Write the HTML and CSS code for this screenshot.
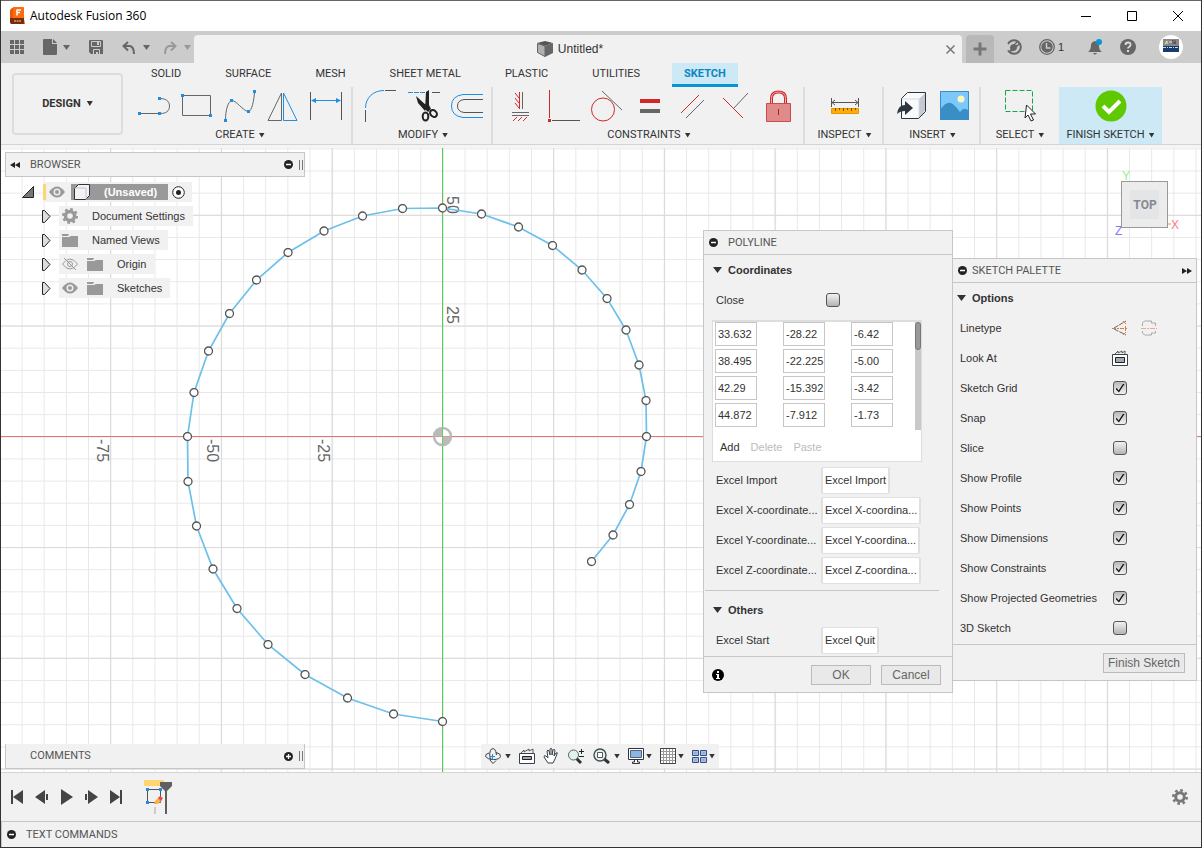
FILE: index.html
```
<!DOCTYPE html>
<html lang="en">
<head>
<meta charset="utf-8">
<title>Autodesk Fusion 360</title>
<link rel="stylesheet" href="styles.css">
</head>
<body>
<header class="titlebar">
  <svg class="app-icon" width="15" height="18" viewBox="0 0 15 18"><path d="M2 1h12v11l1 5H1L0 15V3z" fill="#e8590c"/><path d="M3 0h10q1 0 1 1v10H3z" fill="#ff6b0f"/><path d="M0 11h14v5q0 1-1 1H2q-2 0-2-2z" fill="#7b2c05"/><path d="M7 3h4M7 2.500v6M7 5.500h3" stroke="#fff" stroke-width="1.500" fill="none"/><path d="M4 14h7" stroke="#eadbd2" stroke-dasharray="2 .6"/></svg>
  <h1>Autodesk Fusion 360</h1>
  <div class="win-buttons">
    <button aria-label="Minimize"><svg width="12" height="12"><path d="M1 6.500h10" stroke="#000"/></svg></button>
    <button aria-label="Maximize"><svg width="12" height="12"><path d="M1.500 1.500h9v9h-9z" stroke="#000" fill="none"/></svg></button>
    <button aria-label="Close"><svg width="12" height="12"><path d="M1 1l10 10M11 1L1 11" stroke="#000"/></svg></button>
  </div>
</header>

<div class="tabbar">
  <div class="quick">
    <button aria-label="Data panel"><svg width="14" height="14" fill="#666"><path d="M0 0h4v4H0zM5 0h4v4H5zM10 0h4v4h-4zM0 5h4v4H0zM5 5h4v4H5zM10 5h4v4h-4zM0 10h4v4H0zM5 10h4v4H5zM10 10h4v4h-4z"/></svg></button>
    <button aria-label="File"><svg width="14" height="16" fill="#666"><path d="M1 0h8v5h5v10q0 1-1 1H1q-1 0-1-1V1q0-1 1-1zM10 0l4 4h-4z"/></svg><svg width="7" height="5" fill="#666"><path d="M0 0h7L3.500 5z"/></svg></button>
    <button aria-label="Save"><svg width="14" height="14"><path d="M1 0h12q1 0 1 1v13H2l-2-2V1q0-1 1-1z" fill="#666"/><path d="M2.500 1.500h9v5h-9zM4.500 14V9.500h6V14" fill="none" stroke="#ccc"/><path d="M8 2h2v3H8z" fill="#ccc"/><path d="M7 12h2v2H7z" fill="#ccc"/></svg></button>
    <button aria-label="Undo"><svg width="14" height="13"><path d="M6 1L1.500 5 6 9.500M2 5h6q4 1 4 8" fill="none" stroke="#666" stroke-width="2"/></svg><svg width="7" height="5" fill="#666"><path d="M0 0h7L3.500 5z"/></svg></button>
    <button aria-label="Redo"><svg width="14" height="13"><path d="M8 1l4.500 4L8 9.500M12 5H6q-4 1-4 8" fill="none" stroke="#999" stroke-width="2"/></svg><svg width="7" height="5" fill="#999"><path d="M0 0h7L3.500 5z"/></svg></button>
  </div>
  <div class="doc-tab">
    <svg width="16" height="16"><path d="M0 2l8-2 8 2-8 3z" fill="#555"/><path d="M.5 2.500L8 5v10.500l-7.500-4z" fill="#b0b0b0" stroke="#666"/><path d="M8 5l8-3v10l-8 4z" fill="#666"/></svg>
    <span>Untitled*</span>
    <button class="tab-close" aria-label="Close tab"><svg width="9" height="9"><path d="M.5.500l8 8M8.500.500l-8 8" stroke="#777" stroke-width="1.500"/></svg></button>
  </div>
  <div class="account">
    <button class="new-tab" aria-label="New tab"><svg width="14" height="14"><path d="M7 .500v13M.5 7h13" stroke="#777" stroke-width="3"/></svg></button>
    <button aria-label="Extensions"><svg width="16" height="16"><circle cx="8" cy="8" r="6.800" fill="none" stroke="#666" stroke-width="2"/><path d="M0 3l4 4-1 4-3 1z" fill="#ccc"/><path d="M3 13q2-2 1-5 1-3 4-3l3-3 1 1-3 3h2l2-2 1 1-3 3q0 4-4 4-3 0-4 2z" fill="#666"/></svg></button>
    <button aria-label="Job status" class="job"><svg width="16" height="16"><circle cx="8" cy="8" r="7.300" fill="none" stroke="#666" stroke-width="1.300"/><circle cx="8" cy="8" r="5.700" fill="#666"/><path d="M7.500 4v5h4" fill="none" stroke="#ccc" stroke-width="1.500"/></svg><span>1</span></button>
    <button aria-label="Notifications"><svg width="15" height="16"><path d="M0 13q3-2 3-7 0-3 4-4 4 1 4 5 0 4 3 6zM5 14h4q-2 3-4 0z" fill="#666"/><circle cx="11" cy="3" r="3" fill="#0696d7"/></svg></button>
    <button aria-label="Help"><svg width="16" height="16"><circle cx="8" cy="8" r="8" fill="#666"/><path d="M5.500 6q0-2.500 2.500-2.500 3 0 2.500 2.500 0 1-1.500 2-1 .5-1 1.500" stroke="#ddd" stroke-width="1.800" fill="none"/><path d="M7 11h2v2H7z" fill="#ddd"/></svg></button>
    <button aria-label="Profile"><svg width="24" height="24"><circle cx="12" cy="12" r="12" fill="#fff"/><path d="M4 4h16v7H4z" fill="#888"/><path d="M4 11h16v6H4z" fill="#173d6e"/><path d="M6 9l2-3v3m2-2h3m1 2V6h3" stroke="#eee8bd" fill="none"/><path d="M4 12.500h16" stroke="#c8d9e8" stroke-dasharray="3 1 1 1"/><path d="M14 5v4m2-4v4" stroke="#222"/></svg></button>
  </div>
</div>

<section class="ribbon">
  <button class="design">DESIGN <i class="caret"></i></button>
  <div class="ribbon-main">
    <nav class="tabs">
      <a href="#">SOLID</a><a href="#">SURFACE</a><a href="#">MESH</a><a href="#">SHEET METAL</a><a href="#">PLASTIC</a><a href="#">UTILITIES</a><a href="#" class="active">SKETCH</a>
    </nav>
    <div class="groups">
      <div class="group">
        <div class="tools">
          <svg width="32" height="32"><path d="M1 23.500h21M22 8.500c5 0 9.500 2 9.500 7.500s-4 7.500-9 7.500" fill="none" stroke="#666"/><path d="M0 22h3v3H0zM20 22h3v3h-3zM20 7h3v3h-3z" fill="#1a8fe3"/></svg>
          <svg width="32" height="32"><path d="M1.500 5.500h28v20h-28z" fill="none" stroke="#666"/><path d="M0 4h3v3H0zM28 24h3v3h-3z" fill="#1a8fe3"/></svg>
          <svg width="32" height="32"><path d="M1.500 30C1.500 20 4 12 7.500 10.500c4-1 12 11 17 11C28 21 30 10 30.500 2" fill="none" stroke="#666"/><path d="M0 29h3v3H0zM6 9h3v3H6zM23 20h3v3h-3zM29 0h3v3h-3z" fill="#1a8fe3"/></svg>
          <svg width="32" height="32"><path d="M14.500 3v27.500H1z" fill="none" stroke="#666"/><path d="M16.500 3v27.500H30z" fill="none" stroke="#1a8fe3"/></svg>
          <svg width="32" height="32"><path d="M.5 2v28M31.500 2v28" stroke="#555"/><path d="M3 10.500h26" stroke="#1a8fe3"/><path d="M1 10.500l5-2.500v5zM31 10.500L26 8v5z" fill="#1a8fe3"/></svg>
        </div>
        <button class="group-name">CREATE <i class="caret"></i></button>
      </div>
      <div class="group">
        <div class="tools">
          <svg width="32" height="32"><path d="M1.500 18C1.500 8 9 .500 20 .500" fill="none" stroke="#1a8fe3"/><path d="M1.500 20v12M21 .500h11" stroke="#555"/></svg>
          <svg width="32" height="32"><path d="M1 2.500h17" stroke="#1a8fe3" stroke-dasharray="5 1"/><path d="M25 2.500h8" stroke="#555"/><path d="M19 2l3-2v15l2 4-3 3-3-3zM9 6l11 10-2 5-7-8z" fill="#222"/><ellipse cx="18.500" cy="26.500" rx="2.800" ry="4" fill="none" stroke="#222" stroke-width="2"/><ellipse cx="26.500" cy="23.500" rx="3" ry="3.800" transform="rotate(-45 26.500 23.500)" fill="none" stroke="#222" stroke-width="2"/></svg>
          <svg width="32" height="32"><path d="M33 4.500H13Q1.500 6 1.500 16T13 27.500h20" fill="none" stroke="#1a8fe3"/><path d="M33 9.500H14q-6.500 1-6.500 6.500t6.500 6.500h19" fill="none" stroke="#555"/></svg>
        </div>
        <button class="group-name">MODIFY <i class="caret"></i></button>
      </div>
      <div class="group">
        <div class="tools">
          <svg width="32" height="32"><path d="M15.500 2v17M11 3l4 5m-4 0l4 5m-4 0l4 5M9 31l4-4m1 4l4-4m1 4l4-4" stroke="#d12828" fill="none"/><path d="M18.500 2v17M8 22.500h17M8 25.500h17" stroke="#666"/></svg>
          <svg width="32" height="32"><path d="M2.500 0v28" stroke="#d12828"/><path d="M1 29h3v3H1z" fill="#d12828"/><path d="M5 30.500h28" stroke="#555"/></svg>
          <svg width="32" height="32"><circle cx="13" cy="19.500" r="11.500" fill="none" stroke="#d12828"/><path d="M12 1l20 19" stroke="#666"/></svg>
          <svg width="32" height="32"><path d="M7 9h20v4H7z" fill="#d12828"/><path d="M7 19h20v4H7z" fill="#666"/></svg>
          <svg width="32" height="32"><path d="M5 23L23 5" stroke="#d12828"/><path d="M10 28l18-18" stroke="#666"/></svg>
          <svg width="32" height="32"><path d="M4 8l20 20" stroke="#d12828"/><path d="M15 18L29 3" stroke="#666"/></svg>
          <svg width="32" height="32"><path d="M4.500 13.500h24v18h-24z" fill="#e18a8a" stroke="#c94b4b"/><path d="M9.500 13V8.500q0-6.500 7-6.500t7 6.500V13" fill="none" stroke="#d12828" stroke-width="3"/><path d="M9.500 13V8.500q0-6.500 7-6.500t7 6.500V13" fill="none" stroke="#efb0b0"/><path d="M16.500 19v6" stroke="#b51f1f"/></svg>
        </div>
        <button class="group-name">CONSTRAINTS <i class="caret"></i></button>
      </div>
      <div class="group">
        <div class="tools">
          <svg width="32" height="32"><path d="M2.500 8v9M29.500 8v9M3 12.500h26M6 10l-3 2.500L6 15m20-5l3 2.500-3 2.500" stroke="#555" fill="none"/><path d="M2.500 18.500h27v5h-27z" fill="#ffac08" stroke="#e39700"/><path d="M6.500 18v3m4-3v2m4-2v3m4-3v2m4-2v3m4-3v2" stroke="#7c5200"/></svg>
        </div>
        <button class="group-name">INSPECT <i class="caret"></i></button>
      </div>
      <div class="group">
        <div class="tools">
          <svg width="32" height="32"><path d="M6.500 8.500l6-6h18v19l-7 7h-17z" fill="#f9fafc"/><path d="M24 9l6-6v18l-6 7z" fill="#c5cad2"/><path d="M7 9h17v19" stroke="#d5d9df" fill="none"/><path d="M6.500 8.500l6-6h18v19l-7 7h-17z" fill="none" stroke="#2b3440"/><path d="M2 24q1-9 8-9v-4l8 7-8 7v-4q-5 0-8 3z" fill="#30363e"/></svg>
          <svg width="32" height="32"><path d="M2 1h29v29H2z" fill="#7cc8fb"/><circle cx="23" cy="9" r="3.500" fill="#fbf8bb"/><path d="M2 20q6-9 11-7 4 2 9 9 4-6 9-1v9H2z" fill="#3a8ec6"/><path d="M2.500 1.500h28v28h-28z" fill="none" stroke="#3a8ec6"/></svg>
        </div>
        <button class="group-name">INSERT <i class="caret"></i></button>
      </div>
      <div class="group">
        <div class="tools">
          <svg width="32" height="32"><path d="M1.500.500h27v21h-27z" fill="none" stroke="#13a74b" stroke-dasharray="5 2"/><path d="M22.500 15l9 9h-5l3 6-2.500 1-3-6-3 3z" fill="#fff" stroke="#222"/></svg>
        </div>
        <button class="group-name">SELECT <i class="caret"></i></button>
      </div>
      <div class="group finish">
        <div class="tools">
          <svg width="32" height="32"><circle cx="16" cy="16" r="15.500" fill="#5fc900"/><path d="M8 16l6 6 11-11" stroke="#fff" stroke-width="4" fill="none"/></svg>
        </div>
        <button class="group-name">FINISH SKETCH <i class="caret"></i></button>
      </div>
    </div>
  </div>
</section>

<main class="canvas">
  <svg class="sketch" width="100%" height="100%">
    <defs>
      <pattern id="minor" x="442.400" y="436.300" width="22.150" height="22.150" patternUnits="userSpaceOnUse"><path d="M0 0V22.150M0 0H22.150" stroke="#e8e8e8" stroke-width="2" fill="none"/></pattern>
      <pattern id="major" x="442.400" y="436.300" width="110.750" height="110.750" patternUnits="userSpaceOnUse"><path d="M0 0V110.750M0 0H110.750" stroke="#d9d9d9" stroke-width="2.200" fill="none"/></pattern>
      <marker id="node" markerWidth="10" markerHeight="10" refX="5" refY="5" markerUnits="userSpaceOnUse"><circle cx="5" cy="5" r="4" fill="#fff" stroke="#555" stroke-width="1.300"/></marker>
    </defs>
    <g transform="translate(-1 -148)">
      <rect width="5000" height="3000" fill="url(#minor)"/>
      <rect width="5000" height="3000" fill="url(#major)"/>
      <path d="M0 436.500h5000" stroke="#e07878"/>
      <path d="M442.500 0v3000" stroke="#4fcf4f"/>
      <g class="axis">
        <text transform="translate(447 196) rotate(90)">50</text>
        <text transform="translate(447 306) rotate(90)">25</text>
        <text transform="translate(97 439) rotate(90)">-75</text>
        <text transform="translate(207 439) rotate(90)">-50</text>
        <text transform="translate(318 439) rotate(90)">-25</text>
      </g>
      <circle cx="442.500" cy="436.500" r="8.500" fill="#fff" stroke="#bbb" stroke-width="2.500"/>
      <path d="M442.500 436.500v-9a9 9 0 0 0-9 9zM442.500 436.500v9a9 9 0 0 0 9-9z" fill="#bbb"/>
      <path d="M434 436.500h17" stroke="#d99"/><path d="M442.500 428v17" stroke="#6c6"/>
      <polyline points="591.500,561.500 613,535 629.500,504.500 641,471.500 646.500,436.500 646,400.500 639,365 626,330 607,298.500 582,270 552.500,245.500 518.500,227 481.500,214 442.500,208 402.500,208.500 362.500,216 324,231 288,252.500 256.500,280 229.500,313.500 208.500,351 194,392.500 187.500,436.500 188,481.500 196.500,526 213,569 237,608.500 268,644.500 305,674.500 347.500,698 393.500,714 442.500,721.500" fill="none" stroke="#6cc0ea" stroke-width="1.700" marker-start="url(#node)" marker-mid="url(#node)" marker-end="url(#node)"/>
    </g>
  </svg>

  <aside class="browser">
    <div class="dock"><svg width="10" height="6" fill="#222"><path d="M5 0v6L0 3zM10 0v6L5 3z"/></svg><h2>BROWSER</h2><svg class="end" width="9" height="9"><circle cx="4.500" cy="4.500" r="4.500" fill="#222"/><path d="M2 4.500h5" stroke="#fff" stroke-width="1.500"/></svg><i class="grip"></i></div>
    <ul class="tree">
      <li class="root"><svg class="twist" width="12" height="12"><path d="M11.500 .500v11H.5z" fill="#777" stroke="#222"/></svg>
        <div class="node"><i class="mark"></i><svg width="16" height="12"><path d="M0 6q8-11 16 0-8 11-16 0z" fill="#999"/><circle cx="8" cy="6" r="3.500" fill="#eee"/><circle cx="8" cy="6" r="2" fill="#999"/></svg>
          <span class="doc"><svg width="16" height="16"><path d="M.5 4.500l4-4h11v11l-4 4H.5z" fill="#f2f3f6" stroke="#333"/><path d="M1 4h11v11" fill="none" stroke="#bfc3ca"/></svg>(Unsaved)</span>
          <svg width="13" height="13"><circle cx="6.500" cy="6.500" r="5.800" fill="#fff" stroke="#222"/><circle cx="6.500" cy="6.500" r="2.500" fill="#222"/></svg></div></li>
      <li><svg class="twist" width="10" height="13"><path d="M1.500 .500h2L9 6.500l-5.500 6h-2z" fill="#ddd" stroke="#222"/></svg><div class="node"><svg width="16" height="16"><circle cx="8" cy="8" r="4.500" fill="none" stroke="#999" stroke-width="3.500"/><circle cx="8" cy="8" r="6.700" fill="none" stroke="#999" stroke-width="2.600" stroke-dasharray="2.630 2.630"/></svg><span>Document Settings</span></div></li>
      <li><svg class="twist" width="10" height="13"><path d="M1.500 .500h2L9 6.500l-5.500 6h-2z" fill="#ddd" stroke="#222"/></svg><div class="node"><svg width="16" height="13" fill="#999"><path d="M0 3h7l2-1h7v11H0zM0 0h7L6 2H0z"/></svg><span>Named Views</span></div></li>
      <li><svg class="twist" width="10" height="13"><path d="M1.500 .500h2L9 6.500l-5.500 6h-2z" fill="#ddd" stroke="#222"/></svg><div class="node"><svg width="16" height="12"><path d="M.5 6q7.500-10 15 0-7.500 10-15 0z" fill="none" stroke="#999"/><circle cx="8" cy="6" r="2.500" fill="none" stroke="#999"/><path d="M2 0l12 12" stroke="#999"/></svg><svg class="second" width="16" height="13" fill="#999"><path d="M0 3h7l2-1h7v11H0zM0 0h7L6 2H0z"/></svg><span class="deep">Origin</span></div></li>
      <li><svg class="twist" width="10" height="13"><path d="M1.500 .500h2L9 6.500l-5.500 6h-2z" fill="#ddd" stroke="#222"/></svg><div class="node"><svg width="16" height="12"><path d="M0 6q8-11 16 0-8 11-16 0z" fill="#999"/><circle cx="8" cy="6" r="3.500" fill="#eee"/><circle cx="8" cy="6" r="2" fill="#999"/></svg><svg class="second" width="16" height="13" fill="#999"><path d="M0 3h7l2-1h7v11H0zM0 0h7L6 2H0z"/></svg><span class="deep">Sketches</span></div></li>
    </ul>
  </aside>

  <div class="comments dock"><h2>COMMENTS</h2><svg class="end" width="9" height="9"><circle cx="4.500" cy="4.500" r="4.500" fill="#222"/><path d="M2 4.500h5M4.500 2v5" stroke="#fff" stroke-width="1.300"/></svg><i class="grip"></i></div>

  <svg class="viewcube" width="72" height="74"><text x="8" y="12" fill="#8cf58c">Y</text><text x="57" y="61" fill="#ff8080">X</text><text x="1" y="67" fill="#7777ff">Z</text><path d="M53 56h4" stroke="#ff8080"/><rect x="7.500" y="13.500" width="46" height="46" fill="#ebebec" fill-opacity=".93" stroke="#999"/><rect x="16" y="22" width="29" height="29" fill="#e4e5e7"/><text class="face" x="31" y="41" text-anchor="middle">TOP</text></svg>

  <section class="dialog polyline">
    <header><svg width="9" height="9"><circle cx="4.500" cy="4.500" r="4.500" fill="#222"/><path d="M2 4.500h5" stroke="#fff" stroke-width="1.500"/></svg><h2>POLYLINE</h2></header>
    <div class="content">
      <h3><i class="open"></i>Coordinates</h3>
      <div class="row"><label for="close">Close</label><input class="inset" type="checkbox" id="close"></div>
      <div class="coords">
        <div class="scroll">
          <table>
            <tr><td><input type="text" aria-label="X 1" value="33.632"></td><td><input type="text" aria-label="Y 1" value="-28.22"></td><td><input type="text" aria-label="Z 1" value="-6.42"></td></tr>
            <tr><td><input type="text" aria-label="X 2" value="38.495"></td><td><input type="text" aria-label="Y 2" value="-22.225"></td><td><input type="text" aria-label="Z 2" value="-5.00"></td></tr>
            <tr><td><input type="text" aria-label="X 3" value="42.29"></td><td><input type="text" aria-label="Y 3" value="-15.392"></td><td><input type="text" aria-label="Z 3" value="-3.42"></td></tr>
            <tr><td><input type="text" aria-label="X 4" value="44.872"></td><td><input type="text" aria-label="Y 4" value="-7.912"></td><td><input type="text" aria-label="Z 4" value="-1.73"></td></tr>
          </table>
          <div class="track"><i></i></div>
        </div>
        <div class="edit"><button>Add</button><button disabled>Delete</button><button disabled>Paste</button></div>
      </div>
      <div class="row"><label for="b1">Excel Import</label><button id="b1">Excel Import</button></div>
      <div class="row"><label for="b2">Excel X-coordinate...</label><button id="b2">Excel X-coordina...</button></div>
      <div class="row"><label for="b3">Excel Y-coordinate...</label><button id="b3">Excel Y-coordina...</button></div>
      <div class="row"><label for="b4">Excel Z-coordinate...</label><button id="b4">Excel Z-coordina...</button></div>
      <hr>
      <h3><i class="open"></i>Others</h3>
      <div class="row"><label for="b5">Excel Start</label><button id="b5">Excel Quit</button></div>
    </div>
    <footer><svg width="12" height="12"><circle cx="6" cy="6" r="6" fill="#000"/><path d="M5 2h2v2H5zM4 5h3v4h1v1H4V9h1V6H4z" fill="#fff"/></svg><button>OK</button><button>Cancel</button></footer>
  </section>

  <section class="dialog palette">
    <header><svg width="9" height="9"><circle cx="4.500" cy="4.500" r="4.500" fill="#222"/><path d="M2 4.500h5" stroke="#fff" stroke-width="1.500"/></svg><h2>SKETCH PALETTE</h2><svg class="end" width="10" height="6" fill="#222"><path d="M0 0v6l5-3zM5 0v6l5-3z"/></svg></header>
    <div class="content">
      <h3><i class="open"></i>Options</h3>
      <div class="row"><span>Linetype</span><button aria-label="Construction"><svg width="16" height="16"><path d="M2 8l12-7M2 9l12 6" stroke="#666" stroke-dasharray="5 1"/><path d="M0 8.500h16" stroke="#e27a3e" stroke-dasharray="4 1 2 1"/><path d="M13.500 6v5M11 1l3 3M11 15l3-3" stroke="#e27a3e"/></svg></button><button aria-label="Centerline"><svg width="16" height="16"><path d="M1.500 6V3l2-2h7v2h4v3M1.500 11v2l2 2h7v-2h4v-2" fill="none" stroke="#aaa"/><path d="M0 8.500h16" stroke="#efaa86" stroke-dasharray="5 1 2 1"/></svg></button></div>
      <div class="row"><span>Look At</span><button aria-label="Look at"><svg width="16" height="16"><path d="M.5 4.500h15v11H.5z" fill="#fff" stroke="#3a3f48"/><path d="M3 4l3-3v2l4-2v2l3-2v3" fill="none" stroke="#555b66"/><path d="M3.500 7.500h9v5h-9z" fill="#9fa9b9" stroke="#222"/></svg></button></div>
      <div class="row"><label for="c1">Sketch Grid</label><input type="checkbox" id="c1" checked></div>
      <div class="row"><label for="c2">Snap</label><input type="checkbox" id="c2" checked></div>
      <div class="row"><label for="c3">Slice</label><input type="checkbox" id="c3"></div>
      <div class="row"><label for="c4">Show Profile</label><input type="checkbox" id="c4" checked></div>
      <div class="row"><label for="c5">Show Points</label><input type="checkbox" id="c5" checked></div>
      <div class="row"><label for="c6">Show Dimensions</label><input type="checkbox" id="c6" checked></div>
      <div class="row"><label for="c7">Show Constraints</label><input type="checkbox" id="c7" checked></div>
      <div class="row"><label for="c8">Show Projected Geometries</label><input type="checkbox" id="c8" checked></div>
      <div class="row"><label for="c9">3D Sketch</label><input type="checkbox" id="c9"></div>
    </div>
    <footer><button>Finish Sketch</button></footer>
  </section>

  <div class="viewbar">
    <button aria-label="Orbit"><svg width="16" height="16" fill="none" stroke="#39404a"><path d="M11 4.500q5 1 4.500 4-1 3-7 3T.5 8.500Q0 6 4 5M5.500 12q-2-8 1-11 4-2 5 6M5 12l3 3.500 3-3"/><path d="M5 8.500h5M7.500 6v5" stroke="#1a8fe3"/></svg><i class="caret"></i></button>
    <button aria-label="Look at"><svg width="16" height="16"><path d="M.5 5.500h15v10H.5z" fill="#fff" stroke="#3a3f48"/><path d="M2 5l3-3v2l5-3v2l4-2v4" fill="none" stroke="#555b66"/><path d="M3.500 8.500h9v3h-9z" fill="#9fa9b9" stroke="#222"/></svg></button>
    <button aria-label="Pan"><svg width="16" height="16"><path d="M5 15L1 9q0-2 2-1l2 2-1-7q1-2 2 0l1 4V1q1-1 2 0v6l1-5q2-1 2 0l-1 6 2-3q2-1 1 1l-2 5-2 4z" fill="#fff" stroke="#39404a"/></svg></button>
    <button aria-label="Zoom"><svg width="18" height="16"><path d="M9 10l5 5" stroke="#333" stroke-width="3"/><circle cx="6.500" cy="7" r="5" fill="#e2f2ef" stroke="#59656b"/><path d="M12 3.500h5M14.500 1v5M12 8.500h5" stroke="#222"/></svg></button>
    <button aria-label="Fit"><svg width="17" height="16"><path d="M10 10l6 5" stroke="#333" stroke-width="3"/><circle cx="7" cy="7" r="6" fill="#e2f2ef" stroke="#454c52" stroke-width="1.400"/><path d="M4.500 4.500h5v5h-5z" fill="#fff" stroke="#555"/></svg><i class="caret"></i></button>
    <button aria-label="Display settings"><svg width="16" height="16"><path d="M.5.500h15v11H.5z" fill="#fff" stroke="#333"/><path d="M2.500 2.500h11v7h-11z" fill="#8fb5e2" stroke="#48658b"/><path d="M6.500 12v2h-2v1.500h7V14h-2v-2" fill="#fff" stroke="#333"/></svg><i class="caret"></i></button>
    <button aria-label="Grid and snaps"><svg width="16" height="16"><path d="M.5.500h15v15H.5zM3.500 0v16m3-16v16m3-16v16m3-16v16M0 3.500h16m-16 3h16m-16 3h16m-16 3h16" stroke="#999" fill="#fff"/><path d="M.5.500h15v15H.5z" stroke="#444" fill="none"/></svg><i class="caret"></i></button>
    <button aria-label="Viewports"><svg width="15" height="13"><path d="M.5.500h6v5h-6zM8.500.500h6v5h-6zM.5 7.500h6v5h-6zM8.500 7.500h6v5h-6z" fill="#a9c1e8" stroke="#344f80"/><path d="M2.500 2.500h2v1h-2zM10.500 2.500h2v1h-2zM2.500 9.500h2v1h-2zM10.500 9.500h2v1h-2z" fill="#fff" stroke="#8ba6d8"/></svg><i class="caret"></i></button>
  </div>
</main>

<section class="timeline">
  <button aria-label="Go to start"><svg width="12" height="14" fill="#444"><path d="M0 0h2v14H0zM12 0v14L2 7z"/></svg></button>
  <button aria-label="Step back"><svg width="14" height="14" fill="#444"><path d="M10 0v14L0 7zM11 4h2v6h-2z"/></svg></button>
  <button aria-label="Play"><svg width="12" height="16" fill="#444"><path d="M0 0l12 8L0 16z"/></svg></button>
  <button aria-label="Step forward"><svg width="13" height="14" fill="#444"><path d="M3 0l10 7-10 7zM0 4h2v6H0z"/></svg></button>
  <button aria-label="Go to end"><svg width="12" height="14" fill="#444"><path d="M0 0l10 7L0 14zM10 0h2v14h-2z"/></svg></button>
  <button class="feature" aria-label="Sketch feature"><svg width="28" height="34"><path d="M0 0h20v6H0z" fill="#ffd571"/><path d="M3.500 9.500h13v13h-13z" fill="none" stroke="#555"/><path d="M2 8h3v3H2zM15 8h3v3h-3zM2 21h3v3H2z" fill="#1a8fe3"/><path d="M10 24l1-3 4-4 3 3-4 4z" fill="#f4b44c"/><path d="M14 18l2-2 3 2-2 3z" fill="#e84855"/><path d="M10 27h2v7h-2z" fill="#ccc"/><path d="M16 2h12v4l-5 5v23h-2V11l-5-5z" fill="#606060"/></svg></button>
  <button class="settings" aria-label="Timeline settings"><svg width="16" height="16"><circle cx="8" cy="8" r="4.300" fill="none" stroke="#777" stroke-width="3"/><circle cx="8" cy="8" r="6.700" fill="none" stroke="#777" stroke-width="2.600" stroke-dasharray="2.630 2.630"/></svg></button>
</section>
<footer class="commands"><svg width="9" height="9"><circle cx="4.500" cy="4.500" r="4.500" fill="#222"/><path d="M2 4.500h5" stroke="#fff" stroke-width="1.500"/></svg><h2>TEXT COMMANDS</h2></footer>
</body>
</html>
```

FILE: styles.css
```
* { box-sizing: border-box; }
body {
  margin: 0;
  min-height: 100vh;
  display: grid;
  grid-template-rows: 31px 32px auto minmax(560px, 1fr) auto auto;
  grid-template-columns: minmax(0, 1fr);
  border: 1px solid #333;
  border-width: 0 1px 1px;
  background: #f1f1f1;
  color: #333;
  font: 11px/16px "Liberation Sans", Arial, sans-serif;
}
svg { display: block; flex: none; }
h1, h2, h3, ul { margin: 0; padding: 0; font: inherit; }
h2 { font: 11px/16px Roboto, sans-serif; color: #555; }
button { margin: 0; padding: 0; border: 0; background: none; color: inherit; font: inherit; display: flex; align-items: center; }
a { color: inherit; text-decoration: none; }
.caret { display: block; width: 6px; height: 5px; background: #333; clip-path: polygon(0 0, 100% 0, 50% 100%); }

.titlebar { display: flex; align-items: center; gap: 5px; padding: 0 17px 0 9px; background: #fff; border-top: 1px solid #666; color: #000; }
.titlebar h1 { font: 12px/16px "Open Sans", sans-serif; }
.win-buttons { margin-left: auto; display: flex; gap: 34px; }

.tabbar { display: grid; grid-template-columns: 193px minmax(0, 1fr) 239px; background: #ccc; padding-top: 4px; }
.quick { display: flex; align-items: center; padding: 0 0 4px 9px; gap: 19px; }
.quick button { gap: 6px; }
.quick button:nth-child(n+4) { gap: 7px; }
.quick button:nth-child(5) { margin-left: -6px; }
.doc-tab { display: flex; align-items: center; justify-content: center; gap: 5px; background: #f1f1f1; border-radius: 4px 4px 0 0; position: relative; padding-right: 16px; font-size: 12px; }
.doc-tab .tab-close { position: absolute; right: 7px; }
.account { display: flex; align-items: center; gap: 17px; padding-left: 4px; }
.account .new-tab { background: #b8b8b8; width: 28px; height: 28px; justify-content: center; border-radius: 4px 4px 0 0; margin-right: -5px; }
.account button:not(.new-tab) { padding-bottom: 4px; }
.account .job { gap: 3px; margin-right: 7px; }
.account button:last-child { margin-left: 6px; }

.ribbon { display: flex; gap: 15px; background: #f1f1f1; padding-left: 11px; border-bottom: 1px solid #d4d4d4; font-family: Roboto, sans-serif; box-shadow: 0 3px #f5f5f5; margin-bottom: 3px; }
.design { align-self: center; width: 111px; height: 62px; border: 2px solid #ddd; border-radius: 4px; justify-content: center; gap: 6px; font-weight: 700; }
.ribbon-main { flex: 1; min-width: 0; }
.tabs { display: flex; gap: 20px; padding-left: 1px; }
.tabs a { line-height: 20px; padding: 1px 12px 0; border-bottom: 3px solid transparent; }
.tabs .active { background: #cce9f5; border-color: #0696d7; color: #0a86c4; font-weight: 700; }
.groups { display: flex; }
.group { position: relative; min-width: 79px; padding: 3px 11px 0; display: flex; flex-direction: column; align-items: center; gap: 5px; height: 57px; }
.group:first-child { padding-left: 0; }
.group:not(:nth-last-child(-n+2)) { border-right: 2px solid #ddd; padding-right: 9px; }
.group:nth-last-child(2) { min-width: 78px; padding: 3px 0 0; }
.tools { display: flex; gap: 11px; height: 32px; }
.tools svg { width: 32px; overflow: visible; }
.group-name { gap: 4px; white-space: nowrap; }
.group.finish { background: #cce9f5; min-width: 103px; padding: 3px 7px 0; }

.canvas { position: relative; background: #fff; overflow: hidden; border-bottom: 1px solid #d4d4d4; }
.sketch { position: absolute; inset: 0; }
.axis { font-size: 16px; fill: #666; }
.browser { position: absolute; left: 4px; top: 4px; width: 300px; }
.dock { display: flex; align-items: center; height: 25px; padding: 0 1px 0 4px; gap: 10px; background: #f1f1f1; border: 1px solid #c6c6c6; }
.dock .end { margin-left: auto; }
.grip { width: 4px; height: 10px; border: 1px solid #777; border-width: 0 1px; margin-left: -4px; }
.comments { position: absolute; left: 4px; bottom: 3px; width: 300px; padding-left: 24px; border-top: 0; }
.tree { list-style: none; padding-top: 4px; }
.tree li { display: flex; align-items: center; gap: 8px; height: 24px; padding-left: 36px; }
.tree .root { padding-left: 17px; gap: 9px; height: 22px; margin-bottom: 1px; }
.node { display: flex; align-items: center; height: 20px; padding: 0 8px 0 3px; background: #f1f1f1; }
.node span { padding-left: 14px; }
.node .second { margin-left: 9px; }
.root .node { padding: 0 7px 0 0; }
.root .doc { display: flex; align-items: center; gap: 14px; background: #999; color: #fff; font-weight: 700; padding: 0 11px 0 3px; margin: 0 4px 0 6px; }
.mark { width: 3px; height: 16px; background: #ffd571; margin-right: 3px; }
.viewcube { position: absolute; right: 15px; top: 20px; font: 12px "Liberation Sans", sans-serif; }
.face { font: 700 12px Roboto, sans-serif; fill: #85898f; }

.dialog { position: absolute; background: #f1f1f1; border: 1px solid #c6c6c6; }
.dialog header { display: flex; align-items: center; height: 24px; padding: 0 4px 0 5px; gap: 10px; border-bottom: 1px solid #c6c6c6; }
.dialog header .end { margin-left: auto; }
.dialog h3 { display: flex; align-items: center; gap: 6px; height: 30px; padding-left: 9px; font-weight: 700; font-size: 11px; }
.open { width: 9px; height: 6px; background: #333; clip-path: polygon(0 0, 100% 0, 50% 100%); }
.row { display: grid; align-items: center; height: 30px; }
.dialog footer { display: flex; align-items: center; border-top: 1px solid #c6c6c6; }
.dialog footer button { height: 20px; padding: 0 4px; justify-content: center; border: 1px solid #bbb; background: #e9e9e9; color: #666; font-size: 12px; }
.polyline { right: 248px; top: 82px; width: 250px; }
.polyline .row { grid-template-columns: 105px max-content; padding-left: 12px; }
.polyline .row button { height: 27px; padding: 0 2px; border: 2px solid #e0e0e0; border-width: 1px 2px; border-radius: 2px; background: #fff; }
.coords { margin: 5px 30px 3px 8px; border: 2px solid #ddd; border-width: 2px 1px 1px; background: #fff; }
.scroll { display: flex; justify-content: space-between; }
.coords table { border-collapse: collapse; }
.coords td { padding: 0 26px 3px 0; }
.coords td:first-child { padding-left: 2px; }
.coords td:last-child { padding-right: 0; }
.coords input { display: block; width: 42px; height: 24px; margin: 0; padding: 0 0 0 2px; border: 1px solid #c6c6c6; font: inherit; color: inherit; }
.track { width: 6px; background: #c9c9cb; }
.track i { display: block; height: 28px; border: 1px solid #777; border-radius: 3px; background: #999; }
.edit { display: flex; gap: 11px; height: 31px; padding: 2px 7px 0; }
.edit button:disabled { color: #bbb; }
input[type="checkbox"] { appearance: none; width: 14px; height: 14px; margin: 0; border: 1px solid #555; border-radius: 3px; background: linear-gradient(#b8b8b8, #f2f2f2); display: grid; place-items: center; }
input[type="checkbox"]:not(:checked) { background: linear-gradient(#f2f2f2, #b4b4b4); }
input[type="checkbox"]:checked::after { content: ""; width: 9px; height: 9px; background: #111; clip-path: polygon(0 58%, 14% 50%, 35% 78%, 86% 0, 100% 6%, 38% 100%); }
.polyline hr { height: 1px; margin: 5px 13px 4px 1px; border: 0; background: #c6c6c6; }
.polyline footer { height: 36px; gap: 10px; padding: 0 11px 0 8px; margin-top: 1px; }
.polyline footer svg { margin-right: auto; }
.polyline footer button { width: 60px; }
.inset { justify-self: start; }
.polyline .inset { margin-left: 5px; }
.palette { right: 4px; top: 110px; width: 245px; }
.palette header { gap: 5px; }
.palette h3 { padding-left: 4px; }
.palette .row { grid-template-columns: 152px 16px 16px; column-gap: 0; padding-left: 7px; }
.palette .row button + button { margin-left: 13px; }
.palette .row input { margin-left: 1px; }
.palette footer { height: 36px; margin-top: 1px; padding-right: 11px; justify-content: flex-end; }

.viewbar { position: absolute; left: 40%; bottom: 4px; height: 24px; display: flex; align-items: center; gap: 8px; padding: 0 4px; background: #f1f1f1; }
.viewbar button { gap: 4px; }
.viewbar button:nth-child(n+6) { gap: 2px; }

.timeline { display: flex; align-items: center; gap: 12px; height: 49px; padding: 0 13px 0 10px; border-bottom: 1px solid #c6c6c6; }
.feature { margin-left: 10px; }
.settings { margin-left: auto; }
.commands { display: flex; align-items: center; gap: 10px; height: 25px; padding-left: 5px; border-left: 1px solid #c6c6c6; }
```
